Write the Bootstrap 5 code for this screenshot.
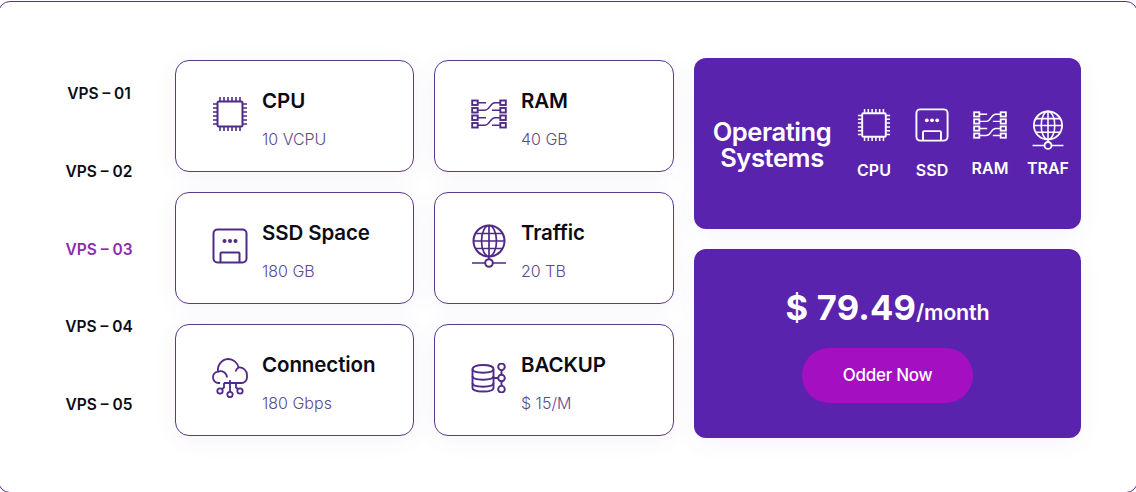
<!DOCTYPE html>
<html lang="en">
<head>
<meta charset="UTF-8" />
<meta name="viewport" content="width=device-width, initial-scale=1.0" />
<title>VPS Plans</title>

<link href="https://cdn.jsdelivr.net/npm/bootstrap@5.3.0/dist/css/bootstrap.min.css" rel="stylesheet" />
<style>
  html, body { height: 492px; overflow: hidden; background: #fff; }
  body { font-family: "Inter", "Liberation Sans", sans-serif; color: #0b0b16; }
  .vps-panel { width: 1140px; height: 492px; margin: 1px 0 0 -2px; padding: 56px 0 0 34px; border: 1px solid #5a2f94; border-radius: 12px; }

  .vps-tabs { width: 132px; height: 381px; margin-right: 10px; padding: 26px 0 24px; }
  .vps-tabs a { font-size: 15.5px; line-height: 20px; font-weight: 600; color: #0b0b16; text-decoration: none; }
  .vps-tabs a.current { color: #8f2bb0; }

  .spec-grid { display: grid; grid-template-columns: 239px 240px; grid-auto-rows: 112px; gap: 20px; margin-top: 2px; }
  .spec-card { flex-direction: row; padding-left: 36px; background: #fff; border: 1px solid #5a3a8c; border-radius: 14px; box-shadow: 0 4px 24px rgba(90, 35, 174, .06); }
  .spec-icon { width: 36px; padding-bottom: 5px; color: #4f2a86; }
  .spec-icon svg { display: block; }
  .spec-text { margin-left: 14px; padding-top: 27px; }
  .spec-title { font-size: 20.5px; line-height: 26px; font-weight: 600; letter-spacing: -.1px; color: #0b0b16; margin: 0; }
  .spec-sub { font-size: 16px; line-height: 20px; font-weight: 300; color: #5c4a8c; margin: 15px 0 0; }

  .side-col { width: 387px; margin-left: 20px; }
  .side-box { background: #5a23ae; border-radius: 12px; color: #fff; box-shadow: 0 6px 24px rgba(90, 35, 174, .05); }
  .os-box { height: 171px; padding-left: 18px; }
  .os-heading { width: 120px; padding-top: 2px; font-size: 25.5px; line-height: 26px; font-weight: 600; letter-spacing: -.4px; text-align: center; margin: 0; }
  .os-items { margin-left: 13px; }
  .os-item { width: 58px; text-align: center; font-size: 16px; line-height: 20px; font-weight: 600; }
  .os-item svg { display: block; margin: 0 auto 18px; }
  .os-item svg.globe-svg { margin-bottom: 8px; }
  .price-box { height: 189px; margin-top: 20px; padding-top: 37px; }
  .price-line { font-size: 34.5px; line-height: 44px; font-weight: 700; letter-spacing: .2px; }
  .price-line span { font-size: 21.5px; font-weight: 600; letter-spacing: -.2px; }
  .order-btn { width: 171px; height: 55px; margin-top: 14px; font-size: 17px; font-weight: 500; color: #fff; background: #a50fc2; border: 0; letter-spacing: -.3px; }
  .order-btn:hover { color: #fff; background: #950db0; }
</style>
</head>
<body>

<!-- icons used in both the cards and the purple box -->
<svg width="0" height="0" class="d-block position-absolute">
  <defs>
    <symbol id="ic-cpu" viewBox="0 0 36 36">
      <g fill="none" stroke="currentColor" stroke-width="2">
        <rect x="5.5" y="5.5" width="25" height="25" rx="1.5" />
        <path stroke-width="1.6" d="M8 1v4M12 1v4M16 1v4M20 1v4M24 1v4M28 1v4M8 31v4M12 31v4M16 31v4M20 31v4M24 31v4M28 31v4M1 8h4M1 12h4M1 16h4M1 20h4M1 24h4M1 28h4M31 8h4M31 12h4M31 16h4M31 20h4M31 24h4M31 28h4" />
      </g>
    </symbol>
    <symbol id="ic-ssd" viewBox="0 0 36 36">
      <rect x="1.5" y="1.5" width="33" height="33" rx="4" fill="none" stroke="currentColor" stroke-width="2" />
      <path d="M8.5 34v-8.5a1 1 0 0 1 1-1h17a1 1 0 0 1 1 1V34" fill="none" stroke="currentColor" stroke-width="2" />
      <circle cx="12.5" cy="13" r="2" fill="currentColor" /><circle cx="18" cy="13" r="2" fill="currentColor" /><circle cx="23.5" cy="13" r="2" fill="currentColor" />
    </symbol>
    <symbol id="ic-ram" viewBox="0 0 36 30">
      <g fill="none" stroke="currentColor" stroke-width="1.9">
        <rect x="1.200" y="1.500" width="5.500" height="4.500" /><rect x="1.200" y="9" width="5.500" height="4.500" /><rect x="1.200" y="16.500" width="5.500" height="4.500" /><rect x="1.200" y="24" width="5.500" height="4.500" />
        <rect x="29.300" y="1.500" width="5.500" height="4.500" /><rect x="29.300" y="9" width="5.500" height="4.500" /><rect x="29.300" y="16.500" width="5.500" height="4.500" /><rect x="29.300" y="24" width="5.500" height="4.500" />
        <path stroke-width="1.500" d="M7 3.700h8M7 11.200h7c5 0 5-7.500 10-7.500h5M21 11.200h8M7 18.700h8M7 26.200h7c5 0 5-7.500 10-7.500h5M21 26.200h8" />
      </g>
    </symbol>
    <symbol id="ic-globe" viewBox="0 0 36 44">
      <g fill="none" stroke="currentColor" stroke-width="1.7">
        <circle cx="18" cy="17" r="15.5" stroke-width="2" />
        <ellipse cx="18" cy="17" rx="7.5" ry="15.5" />
        <path d="M18 1.500v31M2.500 17h31M4.500 9.500h27M4.500 24.500h27" />
        <path d="M18 32.500v3M1 39h13M22 39h13" />
        <circle cx="18" cy="39" r="3.800" stroke-width="2" />
      </g>
    </symbol>
    <symbol id="ic-cloud" viewBox="0 0 36 40">
      <g fill="none" stroke="currentColor" stroke-width="1.8">
        <path d="M8 25H6.500A5.500 5.500 0 0 1 1 19.500 6 6 0 0 1 6 13.600 11 11 0 0 1 16 1a10.500 10.500 0 0 1 10.500 8.500A7.500 7.500 0 0 1 35 17v2.500A5.500 5.500 0 0 1 29.500 25H12" />
        <path d="M6 13.600a6.500 6.500 0 0 1 9 6M26.500 9.500a7 7 0 0 0-3 4" />
        <path d="M18 22v12M12 25v4.500l-2 1.500M24 25v4.500l2 1.500" />
        <circle cx="8" cy="33" r="2.700" /><circle cx="18" cy="36.500" r="2.700" /><circle cx="28" cy="33" r="2.700" />
      </g>
    </symbol>
    <symbol id="ic-backup" viewBox="0 0 36 30">
      <g fill="none" stroke="currentColor" stroke-width="1.9">
        <path d="M1.500 6c0-2.500 4.700-4 10.500-4s10.500 1.500 10.500 4v19c0 2.200-4.700 3.500-10.500 3.500S1.500 27.200 1.500 25z" />
        <path d="M1.500 6c0 2.400 4.700 3.700 10.500 3.700S22.500 8.400 22.500 6M1.500 13c0 2.400 4.700 3.700 10.500 3.700S22.500 15.400 22.500 13M1.500 20c0 2.400 4.700 3.700 10.500 3.700S22.500 22.400 22.500 20" />
        <path d="M22.500 15H27M30.500 7v4.500M30.500 18.500V23" />
        <circle cx="30.500" cy="3.800" r="3.300" /><circle cx="30.500" cy="15" r="3.300" /><circle cx="30.500" cy="26.200" r="3.300" />
      </g>
    </symbol>
  </defs>
</svg>

<div class="vps-panel d-flex align-items-start">
  <div class="vps-tabs d-flex flex-column justify-content-between align-items-center">
    <a href="#">VPS – 01</a>
    <a href="#">VPS – 02</a>
    <a href="#" class="current">VPS – 03</a>
    <a href="#">VPS – 04</a>
    <a href="#">VPS – 05</a>
  </div>

  <div class="spec-grid">
    <div class="card spec-card">
      <div class="spec-icon d-flex align-items-center"><svg width="36" height="36"><use href="#ic-cpu" /></svg></div>
      <div class="spec-text"><h5 class="spec-title">CPU</h5><p class="spec-sub">10 VCPU</p></div>
    </div>
    <div class="card spec-card">
      <div class="spec-icon d-flex align-items-center"><svg width="36" height="30"><use href="#ic-ram" /></svg></div>
      <div class="spec-text"><h5 class="spec-title">RAM</h5><p class="spec-sub">40 GB</p></div>
    </div>
    <div class="card spec-card">
      <div class="spec-icon d-flex align-items-center"><svg width="36" height="36"><use href="#ic-ssd" /></svg></div>
      <div class="spec-text"><h5 class="spec-title">SSD Space</h5><p class="spec-sub">180 GB</p></div>
    </div>
    <div class="card spec-card">
      <div class="spec-icon d-flex align-items-center"><svg width="36" height="44"><use href="#ic-globe" /></svg></div>
      <div class="spec-text"><h5 class="spec-title">Traffic</h5><p class="spec-sub">20 TB</p></div>
    </div>
    <div class="card spec-card">
      <div class="spec-icon d-flex align-items-center"><svg width="36" height="40"><use href="#ic-cloud" /></svg></div>
      <div class="spec-text"><h5 class="spec-title">Connection</h5><p class="spec-sub">180 Gbps</p></div>
    </div>
    <div class="card spec-card">
      <div class="spec-icon d-flex align-items-center"><svg width="36" height="30"><use href="#ic-backup" /></svg></div>
      <div class="spec-text"><h5 class="spec-title">BACKUP</h5><p class="spec-sub">$ 15/M</p></div>
    </div>
  </div>

  <div class="side-col">
    <div class="side-box os-box d-flex align-items-center">
      <h4 class="os-heading">Operating Systems</h4>
      <div class="os-items d-flex align-items-center">
        <div class="os-item"><svg width="34" height="34"><use href="#ic-cpu" /></svg>CPU</div>
        <div class="os-item"><svg width="34" height="34"><use href="#ic-ssd" /></svg>SSD</div>
        <div class="os-item"><svg width="34" height="30"><use href="#ic-ram" /></svg>RAM</div>
        <div class="os-item"><svg class="globe-svg" width="34" height="40"><use href="#ic-globe" /></svg>TRAF</div>
      </div>
    </div>
    <div class="side-box price-box text-center">
      <div class="price-line">$ 79.49<span>/month</span></div>
      <a href="#" class="btn rounded-pill order-btn d-inline-flex align-items-center justify-content-center">Odder Now</a>
    </div>
  </div>
</div>

<script src="https://cdn.jsdelivr.net/npm/bootstrap@5.3.0/dist/js/bootstrap.bundle.min.js"></script>
</body>
</html>
